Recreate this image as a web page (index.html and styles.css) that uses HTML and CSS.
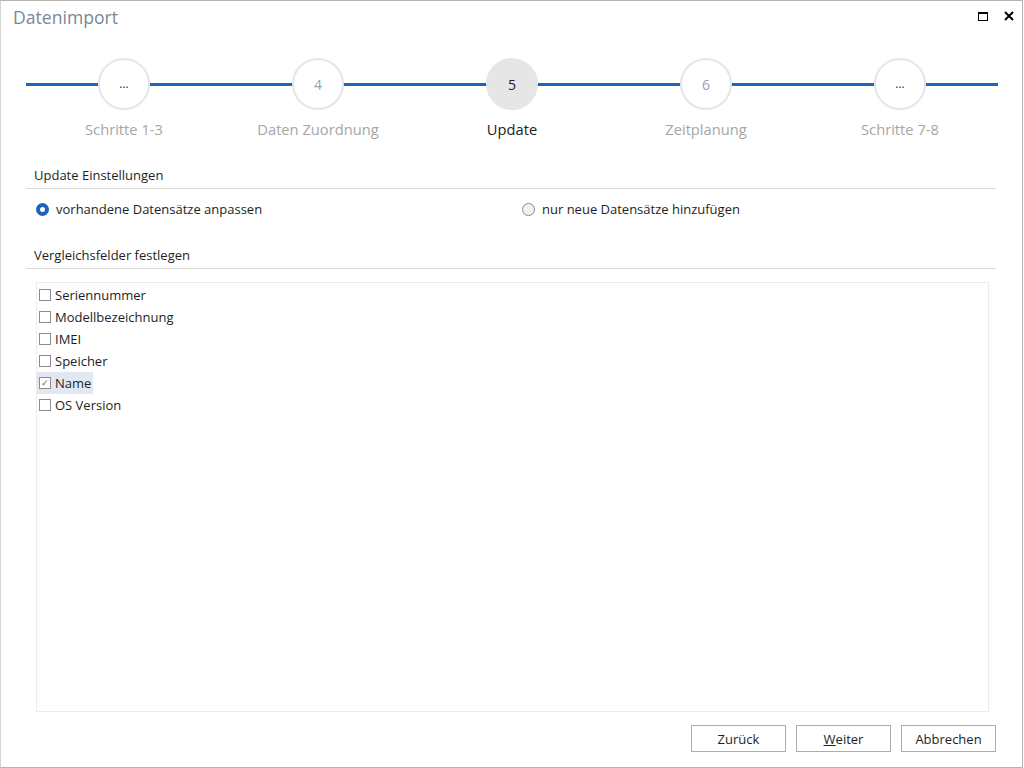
FILE: index.html
```html
<!DOCTYPE html>
<html lang="de">
<head>
    <meta charset="UTF-8">
    <title>Datenimport</title>
    <link rel="stylesheet" href="styles.css">
</head>
<body>

<div class="window">
    <!-- Titelleiste -->
    <div class="titlebar">
        <span class="title">Datenimport</span>
        <div class="win-buttons">
            <span class="btn-max"></span>
            <svg class="btn-close" width="10" height="10" viewBox="0 0 10 10">
                <path d="M1 1 L9 9 M9 1 L1 9" stroke="#000" stroke-width="2"/>
            </svg>
        </div>
    </div>

    <!-- Schritte -->
    <div class="stepper">
        <div class="step">
            <div class="circle dots">...</div>
            <div class="label">Schritte 1-3</div>
        </div>
        <div class="step">
            <div class="circle">4</div>
            <div class="label">Daten Zuordnung</div>
        </div>
        <div class="step active">
            <div class="circle">5</div>
            <div class="label">Update</div>
        </div>
        <div class="step">
            <div class="circle">6</div>
            <div class="label">Zeitplanung</div>
        </div>
        <div class="step">
            <div class="circle dots">...</div>
            <div class="label">Schritte 7-8</div>
        </div>
    </div>

    <div class="content">
        <div class="section-head">Update Einstellungen</div>
        <div class="radio-row">
            <label class="radio checked"><span class="dot"></span>vorhandene Datensätze anpassen</label>
            <label class="radio"><span class="dot"></span>nur neue Datensätze hinzufügen</label>
        </div>

        <div class="section-head second">Vergleichsfelder festlegen</div>
        <div class="listbox">
            <div class="item"><span class="check"></span>Seriennummer</div>
            <div class="item"><span class="check"></span>Modellbezeichnung</div>
            <div class="item"><span class="check"></span>IMEI</div>
            <div class="item"><span class="check"></span>Speicher</div>
            <div class="item selected"><span class="check on">&#10003;</span>Name</div>
            <div class="item"><span class="check"></span>OS Version</div>
        </div>

        <div class="buttons">
            <button class="btn">Zurück</button>
            <button class="btn"><u>W</u>eiter</button>
            <button class="btn">Abbrechen</button>
        </div>
    </div>
</div>

</body>
</html>
```

FILE: styles.css
```css
body {
    margin: 0;
    font-family: "Open Sans", "Noto Sans", sans-serif;
    font-size: 13px;
    color: #1e1e1e;
    background: #fff;
}

.window {
    box-sizing: border-box;
    width: 1023px;
    height: 768px;
    border: 1px solid #b4b4b4;
    border-left-color: #d4d4d4;
    display: flex;
    flex-direction: column;
}

/* Titelleiste */
.titlebar {
    box-sizing: border-box;
    height: 35px;
    display: flex;
    align-items: flex-start;
    justify-content: space-between;
    padding: 4px 8px 0 12px;
}
.title {
    font-size: 17.6px;
    line-height: 24px;
    color: #7b8796;
}
.win-buttons {
    display: flex;
    align-items: center;
    gap: 16px;
    margin-top: 6px;
}
.btn-max {
    box-sizing: border-box;
    width: 10px;
    height: 9px;
    border: 1px solid #000;
    border-top-width: 2px;
}

/* Schritte */
.stepper {
    display: flex;
    justify-content: center;
    width: 972px;
    margin: 22px 0 0 25px;
    background: linear-gradient(#1a66b8, #1a66b8) no-repeat;
    background-size: 972px 3px;
    background-position: 0 25px;
}
.step {
    width: 194px;
    display: flex;
    flex-direction: column;
    align-items: center;
}
.circle {
    box-sizing: border-box;
    width: 52px;
    height: 52px;
    border-radius: 50%;
    border: 2px solid #e6e6e6;
    background: #fff;
    display: flex;
    align-items: center;
    justify-content: center;
    font-size: 14px;
    color: #a0a0a0;
}
.circle.dots {
    color: #333;
    font-size: 12px;
    padding-bottom: 2px;
}
.step.active .circle {
    background: #e6e6e6;
    color: #222;
}
.label {
    margin-top: 9px;
    line-height: 20px;
    font-size: 14.7px;
    color: #a6a6a6;
}
.step.active .label {
    color: #222;
}

.content {
    flex: 1;
    display: flex;
    flex-direction: column;
    padding: 0 25px;
}

.section-head {
    margin-top: 26px;
    padding: 0 0 3px 8px;
    line-height: 20px;
    border-bottom: 1px solid #dcdcdc;
    margin-right: 1px;
}
.section-head.second {
    margin-top: 26px;
}

.radio-row {
    display: flex;
    margin-top: 10px;
    padding-left: 10px;
    line-height: 20px;
}
.radio {
    display: flex;
    align-items: center;
    gap: 7px;
}
.radio.checked {
    width: 486px;
    flex-shrink: 0;
}
.radio .dot {
    box-sizing: border-box;
    width: 13px;
    height: 13px;
    border-radius: 50%;
    border: 1px solid #8a8a8a;
    background: #f2f2f2;
}
.radio.checked .dot {
    border: 4px solid #1a66b8;
    background: #fff;
}

.listbox {
    margin: 13px 8px 0 10px;
    height: 430px;
    box-sizing: border-box;
    border: 1px solid #ececec;
    padding-top: 1px;
}
.item {
    display: flex;
    align-items: center;
    width: max-content;
    height: 22px;
    padding: 0 2px 0 2px;
    gap: 4px;
}
.item.selected {
    background: #e1e8f2;
}
.check {
    box-sizing: border-box;
    width: 12px;
    height: 12px;
    border: 1px solid #8c8c8c;
    background: #fff;
    font-size: 9px;
    line-height: 10px;
    text-align: center;
    color: #666;
}

.buttons {
    display: flex;
    justify-content: flex-end;
    gap: 10px;
    margin: 13px 1px 0 0;
}
.btn {
    width: 95px;
    height: 27px;
    font-family: inherit;
    font-size: 13px;
    color: #1e1e1e;
    background: #fff;
    border: 1px solid #adadad;
    padding: 0;
}
```
